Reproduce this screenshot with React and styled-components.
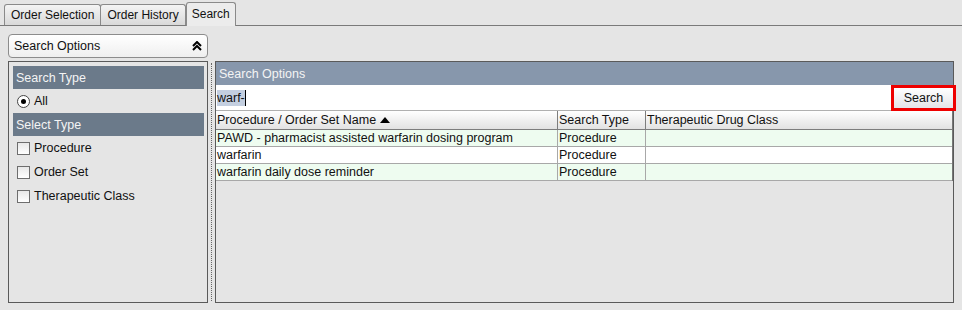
import React from "react";
import styled, { createGlobalStyle, css } from "styled-components";

const GlobalStyle = createGlobalStyle`
  html, body {
    margin: 0;
    padding: 0;
    background: #e5e5e5;
    font-family: "Liberation Sans", Arial, sans-serif;
    color: #111;
  }
`;

const Page = styled.div`
  width: 962px;
  height: 310px;
  background: #e5e5e5;
  overflow: hidden;
`;

const TabBar = styled.div`
  display: flex;
  align-items: flex-end;
  height: 25px;
  padding-left: 4px;
  border-bottom: 1px solid #7a7a7a;
`;

const Tab = styled.div`
  height: 20px;
  padding: 0 6px;
  display: flex;
  align-items: center;
  font-size: 12px;
  border: 1px solid #8a8a8a;
  border-bottom: none;
  border-radius: 3px 3px 0 0;
  background: linear-gradient(#f4f4f4, #d9d9d9);
  margin-right: -1px;
  ${(p) =>
    p.active &&
    css`
      height: 22px;
      margin-bottom: -1px;
      background: #ececec;
      padding: 0 5px 1px;
      position: relative;
      margin-left: 1px;
    `}
`;

const Body = styled.div`
  padding: 8px 0 0 8px;
`;

const CollapseBar = styled.div`
  width: 200px;
  height: 24px;
  display: flex;
  align-items: center;
  justify-content: space-between;
  padding: 0 5px;
  box-sizing: border-box;
  border: 1px solid #8c8c8c;
  border-radius: 4px;
  background: linear-gradient(#ffffff, #efefef);
  font-size: 12.5px;
`;

const MainRow = styled.div`
  display: flex;
  margin-top: 3px;
  height: 242px;
`;

const LeftPanel = styled.div`
  width: 200px;
  box-sizing: border-box;
  border: 1px solid #5a5a5a;
  padding: 4px 3px 0 4px;
`;

const Divider = styled.div`
  width: 7px;
  display: flex;
  justify-content: center;
  &::after {
    content: "";
    width: 0;
    border-left: 1px dotted #666;
    margin-top: 2px;
    margin-bottom: 2px;
  }
`;

const RightPanel = styled.div`
  width: 739px;
  box-sizing: border-box;
  border: 1px solid #5a5a5a;
  display: flex;
  flex-direction: column;
`;

const SectionHeader = styled.div`
  height: 23px;
  display: flex;
  align-items: center;
  padding-left: 3px;
  font-size: 12.5px;
  color: #f4f4f4;
  background: ${(p) => (p.light ? "#8797ac" : "#6b7a8a")};
`;

const OptionRow = styled.label`
  display: flex;
  align-items: center;
  height: 24px;
  padding-left: 4px;
  font-size: 12.5px;
  gap: 4px;
`;

const Radio = styled.span`
  width: 11px;
  height: 11px;
  border-radius: 50%;
  border: 1px solid #444;
  background: #fff;
  display: flex;
  align-items: center;
  justify-content: center;
  &::after {
    content: "";
    width: 5px;
    height: 5px;
    border-radius: 50%;
    background: #000;
  }
`;

const Checkbox = styled.span`
  width: 11px;
  height: 11px;
  border: 1px solid #6e6e6e;
  background: linear-gradient(#e8e8e8, #ffffff);
`;

const InputRow = styled.div`
  height: 25px;
  display: flex;
  align-items: center;
  background: #fff;
  border-bottom: 1px solid #b0b0b0;
  font-size: 12.5px;
`;

const Selected = styled.span`
  background: #c4cfe0;
  padding: 1px 0;
  margin-left: 1px;
  border-right: 1px solid #000;
`;

const SearchButton = styled.button`
  margin-left: auto;
  margin-right: -3px;
  margin-top: 1px;
  width: 65px;
  height: 26px;
  border: 3px solid #ee0000;
  background: linear-gradient(#ffffff, #e4e4e8);
  font-family: inherit;
  font-size: 12.5px;
  color: #111;
  padding: 0;
  position: relative;
`;

const Table = styled.div`
  display: grid;
  grid-template-columns: 342px 88px 1fr;
  font-size: 12.5px;
  border-right: 1px solid #777;
`;

const HeadCell = styled.div`
  height: 18px;
  display: flex;
  align-items: center;
  gap: 4px;
  padding-left: 1px;
  background: linear-gradient(#ffffff, #e2e2e2);
  border-right: 1px solid #7d7d7d;
  border-bottom: 1px solid #7d7d7d;
  &:nth-child(3) {
    border-right: none;
  }
`;

const Cell = styled.div`
  height: 16px;
  display: flex;
  align-items: center;
  padding-left: 1px;
  white-space: nowrap;
  background: ${(p) => (p.even ? "#ffffff" : "#eefcf0")};
  border-right: 1px solid #a8a8a8;
  border-bottom: 1px solid #a8a8a8;
  &:nth-child(3n) {
    border-right: none;
  }
`;

const SortArrow = () => (
  <svg width="10" height="6" viewBox="0 0 10 6">
    <path d="M0 6 L5 0 L10 6 Z" fill="#000" />
  </svg>
);

const DoubleUp = () => (
  <svg width="10" height="10" viewBox="0 0 10 10">
    <path d="M1 5 L5 1 L9 5 M1 9 L5 5 L9 9" stroke="#000" strokeWidth="2" fill="none" />
  </svg>
);

const rows = [
  ["PAWD - pharmacist assisted warfarin dosing program", "Procedure", ""],
  ["warfarin", "Procedure", ""],
  ["warfarin daily dose reminder", "Procedure", ""],
];

export default function App() {
  return (
    <Page>
      <GlobalStyle />
      <TabBar>
        <Tab>Order Selection</Tab>
        <Tab>Order History</Tab>
        <Tab active>Search</Tab>
      </TabBar>
      <Body>
        <CollapseBar>
          <span>Search Options</span>
          <DoubleUp />
        </CollapseBar>
        <MainRow>
          <LeftPanel>
            <SectionHeader>Search Type</SectionHeader>
            <OptionRow>
              <Radio />
              All
            </OptionRow>
            <SectionHeader>Select Type</SectionHeader>
            <OptionRow>
              <Checkbox />
              Procedure
            </OptionRow>
            <OptionRow>
              <Checkbox />
              Order Set
            </OptionRow>
            <OptionRow>
              <Checkbox />
              Therapeutic Class
            </OptionRow>
          </LeftPanel>
          <Divider />
          <RightPanel>
            <SectionHeader light>Search Options</SectionHeader>
            <InputRow>
              <Selected>warf-</Selected>
              <SearchButton>Search</SearchButton>
            </InputRow>
            <Table>
              <HeadCell>
                Procedure / Order Set Name <SortArrow />
              </HeadCell>
              <HeadCell>Search Type</HeadCell>
              <HeadCell>Therapeutic Drug Class</HeadCell>
              {rows.map((r, i) =>
                r.map((c, j) => (
                  <Cell key={`${i}-${j}`} even={i % 2 === 1}>
                    {c}
                  </Cell>
                ))
              )}
            </Table>
          </RightPanel>
        </MainRow>
      </Body>
    </Page>
  );
}
